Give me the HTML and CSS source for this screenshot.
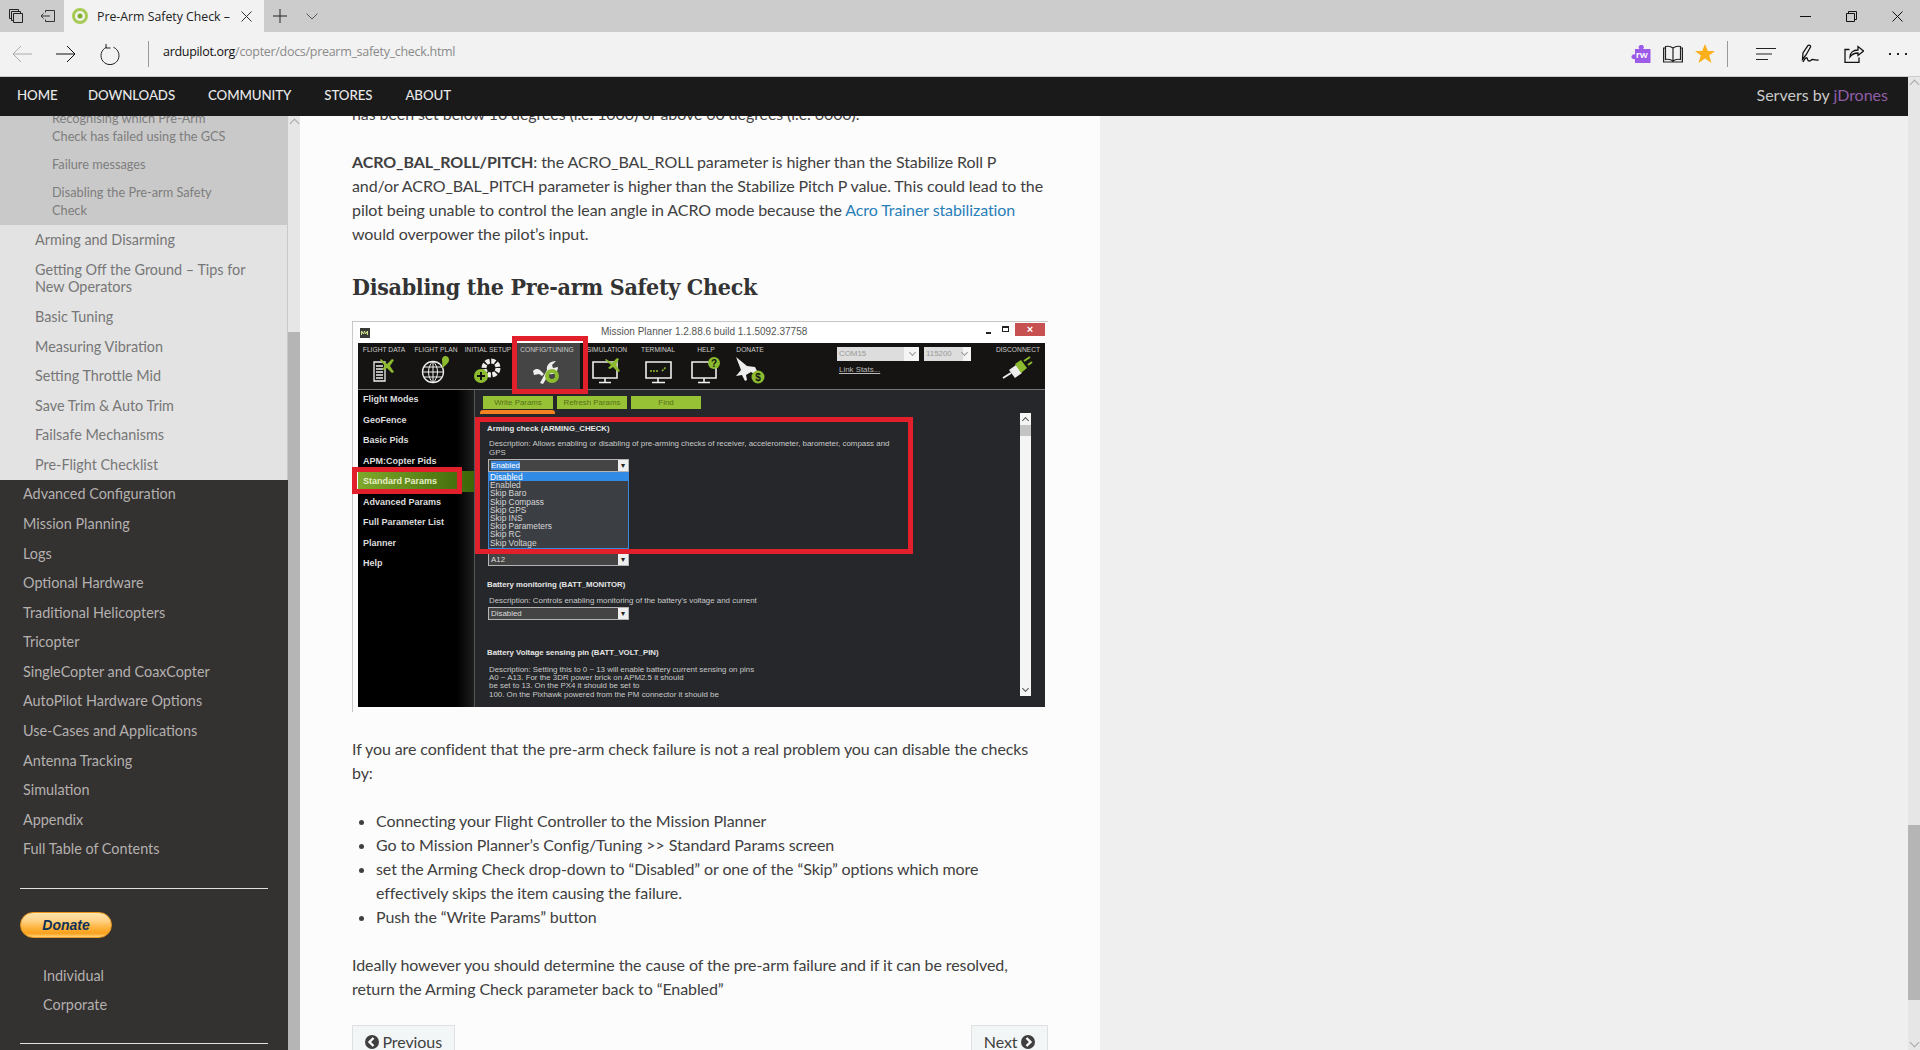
FILE: index.html
```html
<!DOCTYPE html>
<html lang="en">
<head>
    <meta charset="UTF-8">
    <title>Pre-Arm Safety Check</title>
    <link rel="stylesheet" href="styles.css">
</head>
<body>

    <!-- browser tab strip -->
    <div class="tabbar">
        <div class="tabbar-btn">
            <svg width="16" height="16" viewBox="0 0 16 16" fill="none" stroke="#222"><path d="M1.500 1.500h9v2M1.500 1.500v9h2M3.500 3.500h9v2M3.500 3.500v9h2M5.500 5.500h9v9h-9z"/></svg>
        </div>
        <div class="tabbar-btn">
            <svg width="16" height="14" viewBox="0 0 16 14" fill="none" stroke="#333"><path d="M5.500 3.500V1.500h9v11h-9v-2M1 7h9M3.500 4.500L1 7l2.500 2.500"/></svg>
        </div>
        <div class="tab">
            <svg width="16" height="16" viewBox="0 0 16 16"><circle cx="8" cy="8" r="6.500" fill="none" stroke="#a6cc55" stroke-width="3"/><circle cx="8" cy="8" r="2.500" fill="#7fae2e"/></svg>
            <span class="tab-title">Pre-Arm Safety Check –</span>
            <svg class="tab-close" width="11" height="11" viewBox="0 0 11 11" stroke="#333" fill="none"><path d="M.5.5l10 10M10.500.5l-10 10"/></svg>
        </div>
        <div class="tabbar-btn">
            <svg width="14" height="14" viewBox="0 0 14 14" stroke="#222" fill="none"><path d="M7 0v14M0 7h14"/></svg>
        </div>
        <div class="tabbar-btn">
            <svg width="12" height="7" viewBox="0 0 12 7" stroke="#555" fill="none"><path d="M.5.5L6 6 11.500.5"/></svg>
        </div>
        <div class="window-btns">
            <div class="window-btn"><svg width="11" height="11" viewBox="0 0 11 11" stroke="#111" fill="none"><path d="M0 5.500h11"/></svg></div>
            <div class="window-btn"><svg width="11" height="11" viewBox="0 0 11 11" stroke="#111" fill="none"><path d="M.5 2.500h8v8h-8zM2.500 2.500v-2h8v8h-2"/></svg></div>
            <div class="window-btn"><svg width="11" height="11" viewBox="0 0 11 11" stroke="#111" fill="none"><path d="M.5.5l10 10M10.500.5l-10 10"/></svg></div>
        </div>
    </div>

    <!-- address bar -->
    <div class="toolbar">
        <div class="tool-btn"><svg width="20" height="18" viewBox="0 0 20 18" stroke="#aaa" fill="none"><path d="M20 9H1M9 1L1 9l8 8"/></svg></div>
        <div class="tool-btn"><svg width="20" height="18" viewBox="0 0 20 18" stroke="#111" fill="none"><path d="M0 9h19M11 1l8 8-8 8"/></svg></div>
        <div class="tool-btn"><svg width="20" height="22" viewBox="0 0 20 22" stroke="#222" fill="none"><path d="M6.500 4.300A9 9 0 1 0 13.500 4.300M6 1v4h4.500" /></svg></div>
        <div class="tool-sep"></div>
        <div class="url"><b>ardupilot.org</b>/copter/docs/prearm_safety_check.html</div>
        <div class="tool-right">
            <div class="ext-btn">
                <svg width="20" height="19" viewBox="0 0 20 19"><path d="M4 4h4.500a2.500 2.500 0 1 1 3.500 0H19.500v14H4v-4a2.500 2.500 0 1 1 0-4.500z" fill="#9d5ce8"/></svg>
                <span class="ext-label">rw</span>
            </div>
            <div class="ext-btn"><svg width="20" height="18" viewBox="0 0 20 18" fill="none" stroke="#222" stroke-width="1.200"><path d="M10 3C8 1.500 5 1 2.500 1.500v13C5 14 8 14.500 10 16c2-1.500 5-2 7.500-1.500v-13C15 1 12 1.500 10 3zM10 3v13M2.500 3H.6v14h18.800V3h-1.900"/></svg></div>
            <div class="ext-btn"><svg width="20" height="20" viewBox="0 0 20 20"><path d="M10 0l2.900 7h7.100l-5.800 4.500 2.300 7.500L10 14.500 3.500 19l2.300-7.500L0 7h7.100z" fill="#fbb01b"/></svg></div>
            <div class="tool-sep right"></div>
            <div class="tool-btn"><svg width="20" height="14" viewBox="0 0 20 14" stroke="#222" fill="none"><path d="M0 1.500h20M0 7h16M0 12.500h12"/></svg></div>
            <div class="tool-btn"><svg width="20" height="20" viewBox="0 0 20 20" stroke="#111" stroke-width="1.300" fill="none"><path d="M2.500 15.500L3 9l5-7.500c1-1 3 0 2.500 1.500L6 11zM3 18c1.500-3 3-5 4-4s0 3 2 3 2-1.500 3.500-1.500 2 1 6 .5"/></svg></div>
            <div class="tool-btn"><svg width="20" height="18" viewBox="0 0 20 18" stroke="#111" stroke-width="1.300" fill="none"><path d="M5.500 4.500H1v13h14v-5M6 12c0-4 3-7 8-7V1.500L19.500 6 14 10.500V8c-4 0-6 1-8 4z"/></svg></div>
            <div class="tool-btn"><svg width="18" height="4" viewBox="0 0 18 4" fill="#222"><rect x="0" y="1" width="2" height="2"/><rect x="8" y="1" width="2" height="2"/><rect x="16" y="1" width="2" height="2"/></svg></div>
        </div>
    </div>

    <div class="page">
        <div class="page-main">
            <nav class="topnav">
                <a class="home-link" href="#">HOME</a>
                <a href="#">DOWNLOADS</a>
                <a href="#">COMMUNITY</a>
                <a href="#">STORES</a>
                <a href="#">ABOUT</a>
                <div class="servers">Servers by <a href="#">jDrones</a></div>
            </nav>

            <div class="columns">
                <aside class="sidebar">
                    <div class="sidebar-inner">
                        <ul class="toc-l3">
                            <li>Recognising which Pre-Arm Check has failed using the GCS</li>
                            <li>Failure messages</li>
                            <li>Disabling the Pre-arm Safety Check</li>
                        </ul>
                        <ul class="toc-l2">
                            <li>Arming and Disarming</li>
                            <li>Getting Off the Ground – Tips for New Operators</li>
                            <li>Basic Tuning</li>
                            <li>Measuring Vibration</li>
                            <li>Setting Throttle Mid</li>
                            <li>Save Trim &amp; Auto Trim</li>
                            <li>Failsafe Mechanisms</li>
                            <li>Pre-Flight Checklist</li>
                        </ul>
                        <ul class="toc-l1">
                            <li>Advanced Configuration</li>
                            <li>Mission Planning</li>
                            <li>Logs</li>
                            <li>Optional Hardware</li>
                            <li>Traditional Helicopters</li>
                            <li>Tricopter</li>
                            <li>SingleCopter and CoaxCopter</li>
                            <li>AutoPilot Hardware Options</li>
                            <li>Use-Cases and Applications</li>
                            <li>Antenna Tracking</li>
                            <li>Simulation</li>
                            <li>Appendix</li>
                            <li>Full Table of Contents</li>
                        </ul>
                        <div class="side-extra">
                            <hr>
                            <div class="donate">Donate</div>
                            <ul class="donate-links">
                                <li>Individual</li>
                                <li>Corporate</li>
                            </ul>
                            <hr>
                        </div>
                    </div>
                </aside>
                <div class="scrollbar side-scroll">
                    <div class="scroll-up"></div>
                    <div class="thumb"></div>
                </div>

                <main class="content">
                    <div class="content-inner">
                        <p>has been set below 10 degrees (i.e. 1000) or above 60 degrees (i.e. 6000).</p>
                        <p><strong>ACRO_BAL_ROLL/PITCH</strong>: the ACRO_BAL_ROLL parameter is higher than the Stabilize Roll P<br>and/or ACRO_BAL_PITCH parameter is higher than the Stabilize Pitch P value. This could lead to the pilot being unable to control the lean angle in ACRO mode because the <a href="#">Acro Trainer stabilization</a> would overpower the pilot’s input.</p>
                        <h2>Disabling the Pre-arm Safety Check</h2>

                        <!-- Mission Planner screenshot -->
                        <div class="shot">
                            <div class="mp">
                                <div class="mp-title">
                                    <svg class="mp-logo" width="10" height="10" viewBox="0 0 10 10"><rect width="10" height="10" fill="#3a3a36"/><path d="M1.500 7V3l2 3 1-3 1 3 2-3v4" stroke="#cde08a" fill="none"/></svg>
                                    <span class="mp-title-text">Mission Planner 1.2.88.6 build 1.1.5092.37758</span>
                                    <span class="mp-min"></span>
                                    <span class="mp-max"></span>
                                    <span class="mp-close">×</span>
                                </div>
                                <div class="mp-menu">
                                    <div class="mp-tab">FLIGHT DATA
                                        <svg width="26" height="28" viewBox="0 0 26 28" fill="none"><path d="M3 6h11v19H3zM5 10h7M5 13h7M5 16h7M5 19h7M5 22h7" stroke="#eee" stroke-width="1.300"/><path d="M10 3l6 5 5-5 2 1-4 6 4 6-2 1-5-5-3 2-2-1 3-3-5-6z" fill="#8dbb2f"/></svg>
                                    </div>
                                    <div class="mp-tab">FLIGHT PLAN
                                        <svg width="30" height="28" viewBox="0 0 30 28" fill="none"><circle cx="12" cy="16" r="10.500" stroke="#eee" stroke-width="1.300"/><path d="M12 5.500v21M1.500 16h21M3 11h18M3 21h18M12 5.500c-6 5-6 16 0 21M12 5.500c6 5 6 16 0 21" stroke="#eee"/><path d="M24 0a4 4 0 0 1 4 4c0 3-5 7-7 8 1-3 0-5 0-8a4 4 0 0 1 3-4z" fill="#8dbb2f"/></svg>
                                    </div>
                                    <div class="mp-tab">INITIAL SETUP
                                        <svg width="30" height="28" viewBox="0 0 30 28" fill="none"><circle cx="18" cy="12" r="7" stroke="#eee" stroke-width="5" stroke-dasharray="4 1.500"/><circle cx="8" cy="20" r="7" fill="#8dbb2f"/><path d="M4 20h8M8 16v8" stroke="#111" stroke-width="2"/></svg>
                                    </div>
                                    <div class="mp-tab selected">CONFIG/TUNING
                                        <svg width="30" height="28" viewBox="0 0 30 28" fill="none"><path d="M8 27L15 14c-1-5 3-9 9-9l-4 4 1 3 5-1c0 5-4 8-9 7l-6 10z" fill="#eee"/><path d="M1 15c3-3 6-2 8 0l3 3-2 2-3-2-5 1z" fill="#eee"/><circle cx="20" cy="20" r="5" stroke="#8dbb2f" stroke-width="4"/></svg>
                                    </div>
                                    <div class="mp-tab">SIMULATION
                                        <svg width="32" height="28" viewBox="0 0 32 28" fill="none"><path d="M2 6h24v16H2zM14 22v4M8 26.500h12" stroke="#eee" stroke-width="1.600"/><path d="M15 3l6 4 5-5 2 1-3 6 4 6-2 1-5-5-3 2-2-1 3-3-6-5z" fill="#8dbb2f"/></svg>
                                    </div>
                                    <div class="mp-tab">TERMINAL
                                        <svg width="32" height="28" viewBox="0 0 32 28" fill="none"><path d="M4 6h25v16H4zM16 22v4M10 26.500h13" stroke="#eee" stroke-width="1.600"/><path d="M8 15h9M20 15l4-4" stroke="#8dbb2f" stroke-width="1.600" stroke-dasharray="2 1"/></svg>
                                    </div>
                                    <div class="mp-tab">HELP
                                        <svg width="32" height="28" viewBox="0 0 32 28" fill="none"><path d="M2 6h24v16H2zM14 22v4M8 26.500h12" stroke="#eee" stroke-width="1.600"/><circle cx="24" cy="7" r="6" fill="#8dbb2f"/><text x="24" y="10.500" text-anchor="middle" class="mp-icon-text">?</text></svg>
                                    </div>
                                    <div class="mp-tab">DONATE
                                        <svg width="32" height="28" viewBox="0 0 32 28" fill="none"><path d="M2 1l11 9 8 1 4 8-1 1-7-4-5 3 1 5-2 1-3-6-6 1 5-6z" fill="#eee"/><circle cx="24" cy="21" r="6.500" fill="#8dbb2f"/><text x="24" y="24.500" text-anchor="middle" class="mp-icon-text">$</text></svg>
                                    </div>
                                    <div class="mp-conn">
                                        <div class="mp-fields">
                                            <div class="mp-field wide">COM15</div>
                                            <div class="mp-field">115200</div>
                                        </div>
                                        <div class="mp-link">Link Stats...</div>
                                    </div>
                                    <div class="mp-tab disconnect">DISCONNECT
                                        <svg width="32" height="24" viewBox="0 0 32 24" fill="none"><path d="M1 22l8-5" stroke="#eee" stroke-width="2"/><path d="M7 14l7-5 6 8-7 5z" fill="#eee"/><path d="M13 8l6-4 6 8-6 5z" fill="#8dbb2f"/><path d="M22 5l6-4M26 9l4-3" stroke="#8dbb2f" stroke-width="2"/></svg>
                                    </div>
                                </div>
                                <div class="mp-body">
                                    <div class="mp-side">
                                        <div>Flight Modes</div>
                                        <div>GeoFence</div>
                                        <div>Basic Pids</div>
                                        <div>APM:Copter Pids</div>
                                        <div class="active">Standard Params</div>
                                        <div>Advanced Params</div>
                                        <div>Full Parameter List</div>
                                        <div>Planner</div>
                                        <div>Help</div>
                                    </div>
                                    <div class="mp-params">
                                        <div class="mp-buttons">
                                            <span>Write Params</span>
                                            <span>Refresh Params</span>
                                            <span>Find</span>
                                        </div>
                                        <div class="mp-orange"></div>
                                        <div class="mp-head first">Arming check (ARMING_CHECK)</div>
                                        <div class="mp-desc">Description: Allows enabling or disabling of pre-arming checks of receiver, accelerometer, barometer, compass and<br>GPS</div>
                                        <div class="mp-select"><span class="picked">Enabled</span></div>
                                        <ul class="mp-list">
                                            <li class="on">Disabled</li>
                                            <li>Enabled</li>
                                            <li>Skip Baro</li>
                                            <li>Skip Compass</li>
                                            <li>Skip GPS</li>
                                            <li>Skip INS</li>
                                            <li>Skip Parameters</li>
                                            <li>Skip RC</li>
                                            <li>Skip Voltage</li>
                                        </ul>
                                        <div class="mp-select a12">A12</div>
                                        <div class="mp-head batt">Battery monitoring (BATT_MONITOR)</div>
                                        <div class="mp-desc">Description: Controls enabling monitoring of the battery's voltage and current</div>
                                        <div class="mp-select">Disabled</div>
                                        <div class="mp-head volt">Battery Voltage sensing pin (BATT_VOLT_PIN)</div>
                                        <div class="mp-desc">Description: Setting this to 0 ~ 13 will enable battery current sensing on pins<br>A0 ~ A13. For the 3DR power brick on APM2.5 it should<br>be set to 13. On the PX4 it should be set to<br>100. On the Pixhawk powered from the PM connector it should be</div>
                                        <div class="mp-scroll"><i></i></div>
                                    </div>
                                </div>
                            </div>
                            <div class="redbox box-tab"></div>
                            <div class="redbox box-side"></div>
                            <div class="redbox box-param"></div>
                        </div>

                        <p>If you are confident that the pre-arm check failure is not a real problem you can disable the checks by:</p>
                        <ul class="steps">
                            <li>Connecting your Flight Controller to the Mission Planner</li>
                            <li>Go to Mission Planner’s Config/Tuning &gt;&gt; Standard Params screen</li>
                            <li>set the Arming Check drop-down to “Disabled” or one of the “Skip” options which more effectively skips the item causing the failure.</li>
                            <li>Push the “Write Params” button</li>
                        </ul>
                        <p>Ideally however you should determine the cause of the pre-arm failure and if it can be resolved, return the Arming Check parameter back to “Enabled”</p>
                        <div class="pager">
                            <a class="btn" href="#">
                                <svg width="14" height="14" viewBox="0 0 14 14"><circle cx="7" cy="7" r="7" fill="#404040"/><path d="M8.500 3L4.500 7l4 4" stroke="#fcfcfc" stroke-width="2.400" fill="none"/></svg>
                                Previous
                            </a>
                            <a class="btn" href="#">
                                Next
                                <svg width="14" height="14" viewBox="0 0 14 14"><circle cx="7" cy="7" r="7" fill="#404040"/><path d="M5.500 3l4 4-4 4" stroke="#fcfcfc" stroke-width="2.400" fill="none"/></svg>
                            </a>
                        </div>
                    </div>
                </main>
                <div class="gutter"></div>
            </div>
        </div>
        <div class="scrollbar page-scroll">
            <div class="scroll-up"></div>
            <div class="thumb"></div>
            <div class="scroll-down"></div>
        </div>
    </div>

</body>
</html>
```

FILE: styles.css
```css
* {
    box-sizing: border-box;
}

html, body {
    height: 100%;
}

body {
    margin: 0;
    display: flex;
    flex-direction: column;
    overflow: hidden;
    font-family: 'Lato', sans-serif;
    font-size: 16px;
    color: #404040;
    background-color: #efefef;
}

ul {
    margin: 0;
    padding: 0;
    list-style: none;
}

/* browser chrome */
.tabbar {
    display: flex;
    height: 32px;
    flex: none;
    background-color: #ccc;
}

.tabbar-btn {
    width: 32px;
    display: flex;
    align-items: center;
    justify-content: center;
}

.tab {
    width: 200px;
    display: flex;
    align-items: center;
    padding-left: 8px;
    background-color: #f2f2f2;
}

.tab-title {
    margin-left: 9px;
    font-family: 'Open Sans', sans-serif;
    font-size: 12.300px;
    color: #222;
    white-space: nowrap;
}

.tab-close {
    margin-left: auto;
    margin-right: 12px;
}

.window-btns {
    display: flex;
    margin-left: auto;
}

.window-btn {
    width: 46px;
    display: flex;
    align-items: center;
    justify-content: center;
}

.toolbar {
    display: flex;
    align-items: center;
    height: 45px;
    flex: none;
    background-color: #f2f2f2;
    border-bottom: 1px solid #ccc;
}

.tool-btn {
    width: 44px;
    height: 44px;
    display: flex;
    align-items: center;
    justify-content: center;
}

.tool-sep {
    width: 1px;
    height: 26px;
    margin-left: 16px;
    background-color: #999;
}

.tool-sep.right {
    margin-left: 6px;
    margin-right: 16px;
}

.url {
    margin-left: 14px;
    padding-bottom: 5px;
    font-family: 'Open Sans', sans-serif;
    font-size: 12.500px;
    letter-spacing: -0.300px;
    color: #8a8a8a;
}

.url b {
    font-weight: 400;
    color: #111;
}

.tool-right {
    display: flex;
    align-items: center;
    margin-left: auto;
}

.ext-btn {
    position: relative;
    width: 32px;
    height: 44px;
    display: flex;
    align-items: center;
    justify-content: center;
}

.ext-label {
    position: absolute;
    left: 11px;
    top: 16px;
    font-size: 10px;
    font-weight: 700;
    color: #fff;
}

/* page area */
.page {
    flex: 1;
    min-height: 0;
    display: flex;
}

.page-main {
    flex: 1;
    min-width: 0;
    display: flex;
    flex-direction: column;
}

.topnav {
    display: flex;
    align-items: center;
    gap: 33px;
    height: 39px;
    flex: none;
    padding: 0 20px 3px 17px;
    background-color: #1a1a1a;
}

.topnav > a {
    font-size: 13.300px;
    font-weight: 500;
    letter-spacing: -0.100px;
    color: #e8e8e8;
    text-decoration: none;
}

.topnav > a.home-link {
    margin-right: -2.500px;
}

.servers {
    margin-left: auto;
    padding-bottom: 2px;
    color: #c9c9c9;
}

.servers a {
    color: #8f5ea8;
    text-decoration: none;
}

.columns {
    flex: 1;
    min-height: 0;
    display: flex;
}

.sidebar {
    width: 288px;
    flex: none;
    overflow: hidden;
    background-color: #343131;
}

.sidebar-inner {
    margin-top: -11px;
    font-size: 14.400px;
    line-height: 17.800px;
}

.toc-l3 {
    background-color: #c9c9c9;
    color: #7d7d7d;
    font-size: 12.750px;
}

.toc-l3 li {
    padding: 5.200px 50px 5.200px 52px;
}

.toc-l2 {
    background-color: #e3e3e3;
    border-right: 1px solid #c9c9c9;
    color: #777;
    font-size: 14.400px;
}

.toc-l2 li {
    padding: 5.900px 32px 5.900px 35px;
}

.toc-l1 {
    color: #b3b0ae;
}

.toc-l1 li {
    padding: 5.900px 20px 5.900px 23px;
}

.side-extra {
    padding: 24px 20px 0;
}

.side-extra hr {
    margin: 0;
    border: 0;
    height: 1px;
    background-color: #e0e0e0;
}

.donate {
    width: 92px;
    height: 26px;
    margin-top: 23px;
    border: 1px solid #e8981d;
    border-radius: 13px;
    background: linear-gradient(#ffe3ab 0%, #ffd48a 30%, #fdb33c 62%, #f9a11d 85%, #ffd27e 100%);
    text-align: center;
    font-family: 'Liberation Sans', sans-serif;
    font-size: 14px;
    font-weight: 700;
    font-style: italic;
    line-height: 24px;
    color: #0e3058;
}

.donate-links {
    margin: 23.500px 0 23px;
    color: #b3b0ae;
}

.donate-links li {
    padding: 5.600px 0 5.600px 23px;
}

.scrollbar {
    width: 12px;
    flex: none;
    display: flex;
    flex-direction: column;
    background-color: #e6e6e6;
}

.thumb {
    background-color: #b5b5b5;
}

.scroll-up, .scroll-down {
    position: relative;
    height: 12px;
}

.scroll-up::after, .scroll-down::after {
    content: "";
    position: absolute;
    left: 3px;
    width: 6px;
    height: 6px;
    border: solid #a8a8a8;
    border-width: 1px 0 0 1px;
}

.scroll-up::after {
    top: 4px;
    transform: rotate(45deg);
}

.scroll-down::after {
    top: 1px;
    transform: rotate(225deg);
}

.side-scroll .scroll-up {
    height: 216px;
}

.side-scroll .thumb {
    flex: 1;
}

.page-scroll .scroll-up {
    height: 748px;
}

.page-scroll .thumb {
    height: 175px;
    flex: none;
}

.page-scroll .scroll-down {
    margin-top: auto;
}

/* article */
.content {
    width: 800px;
    flex: none;
    overflow: hidden;
    padding: 0 52px;
    background-color: #fcfcfc;
    letter-spacing: -0.090px;
    line-height: 24px;
    color: #404040;
}

.content-inner {
    margin-top: -14px;
}

.content p {
    margin: 0 0 24px;
}

.content strong {
    font-weight: 700;
}

.content a {
    color: #2980b9;
    text-decoration: none;
}

.content h2 {
    margin: 0;
    padding: 1px 0 18px;
    font-family: 'DejaVu Serif', serif;
    font-stretch: condensed;
    font-size: 23px;
    font-weight: 700;
    letter-spacing: -0.300px;
    line-height: 32px;
    color: #333;
}

.steps {
    margin-bottom: 24px;
    padding-left: 24px;
    list-style: disc;
}

.pager {
    display: flex;
    justify-content: space-between;
}

.content a.btn {
    display: flex;
    align-items: center;
    gap: 3.500px;
    height: 34px;
    padding: 0 12px;
    border: 1px solid #e0e0e0;
    background-color: #f3f6f6;
    color: #404040;
}

/* Mission Planner screenshot, drawn small */
.shot {
    position: relative;
    width: 696px;
    height: 391px;
    margin-bottom: 25px;
    padding: 1px 3px 5px 5px;
    border-left: 1px solid #c8c8c8;
    border-top: 1px solid #c8c8c8;
    font-family: 'Liberation Sans', sans-serif;
    font-size: 7.900px;
    letter-spacing: 0;
    line-height: 8.300px;
    color: #c9c9c9;
}

.mp {
    height: 100%;
    display: flex;
    flex-direction: column;
}

.mp-title {
    display: flex;
    align-items: flex-start;
    height: 20px;
    flex: none;
    padding-left: 2px;
    background-color: #fff;
}

.mp-logo {
    margin-top: 5px;
}

.mp-title-text {
    margin-left: 231px;
    margin-top: 3px;
    font-size: 10px;
    line-height: 12px;
    color: #555;
    white-space: nowrap;
}

.mp-min {
    width: 5px;
    height: 2px;
    margin: 9px 0 0 auto;
    background-color: #222;
}

.mp-max {
    width: 7px;
    height: 6px;
    margin: 3px 0 0 11px;
    border: 1px solid #222;
    border-top-width: 2px;
}

.mp-close {
    width: 30px;
    height: 13px;
    margin-left: 6px;
    background-color: #c75050;
    color: #fff;
    font-size: 11px;
    font-weight: 700;
    line-height: 12px;
    text-align: center;
}

.mp-menu {
    display: flex;
    height: 47px;
    flex: none;
    background-color: #151412;
    border-bottom: 1px solid #777;
}

.mp-tab {
    width: 52px;
    flex: none;
    display: flex;
    flex-direction: column;
    align-items: center;
    padding-top: 3px;
    font-size: 6.700px;
    line-height: 8px;
    color: #ccc;
    white-space: nowrap;
}

.mp-tab:nth-child(4) { width: 66px; }
.mp-tab:nth-child(5) { width: 54px; }
.mp-tab:nth-child(6) { width: 48px; }
.mp-tab:nth-child(7) { width: 48px; }
.mp-tab:nth-child(8) { width: 40px; }

.mp-tab svg {
    margin-top: 2px;
}

.mp-tab.selected {
    background-color: #454545;
}

.mp-tab.disconnect {
    width: 54px;
    margin-left: auto;
}

.mp-icon-text {
    font-size: 10px;
    font-weight: 700;
    fill: #151412;
}

.mp-conn {
    margin-left: 67px;
    padding-top: 4px;
}

.mp-fields {
    display: flex;
    gap: 5px;
}

.mp-field {
    position: relative;
    width: 47px;
    height: 14px;
    padding-left: 2px;
    background: linear-gradient(to right, #ddd 82%, #f5f5f5 82%);
    color: #999;
    line-height: 13px;
}

.mp-field::after {
    content: "";
    position: absolute;
    right: 4px;
    top: 3px;
    width: 4px;
    height: 4px;
    border: solid #999;
    border-width: 0 1px 1px 0;
    transform: rotate(45deg);
}

.mp-field.wide {
    width: 82px;
}

.mp-link {
    margin-top: 5px;
    padding-left: 2px;
    text-decoration: underline;
    color: #bbb;
}

.mp-body {
    flex: 1;
    min-height: 0;
    display: flex;
}

.mp-side {
    width: 117px;
    flex: none;
    background: linear-gradient(to right, #000 85%, #1e1e1e);
    border-right: 1px solid #555;
    color: #ddd;
    font-size: 9px;
    font-weight: 700;
    line-height: 20.500px;
}

.mp-side div {
    padding-left: 5px;
}

.mp-side div:first-child {
    margin-top: -1px;
}

.mp-side .active {
    background: linear-gradient(to right, #7fa92b, #3c6608);
    color: #e6efc8;
}

.mp-params {
    position: relative;
    flex: 1;
    min-width: 0;
    padding: 6px 0 0 12px;
    overflow: hidden;
    background-color: #25272a;
}

.mp-buttons {
    display: flex;
    gap: 4px;
    margin-left: -4px;
    margin-bottom: 1px;
}

.mp-buttons span {
    width: 70px;
    height: 13px;
    background-color: #98c235;
    color: #55711a;
    text-align: center;
    line-height: 13px;
}

.mp-orange {
    width: 75px;
    height: 4px;
    margin-left: -7px;
    border-radius: 3px 3px 0 0;
    background-color: #f58220;
}

.mp-head {
    font-size: 7.800px;
    font-weight: 700;
    color: #e6e6e6;
    white-space: nowrap;
}

.mp-head.first {
    margin-top: 11px;
    margin-bottom: 7px;
}

.mp-head.batt {
    margin-top: 15px;
    margin-bottom: 8px;
}

.mp-head.volt {
    margin-top: 29px;
    margin-bottom: 8px;
}

.mp-desc {
    padding-left: 2px;
    white-space: nowrap;
}

.mp-select {
    position: relative;
    width: 141px;
    height: 13px;
    margin: 2px 0 0 1px;
    padding: 2px;
    border: 1px solid #b5b5b5;
    background-color: #444;
    color: #ddd;
    line-height: 8px;
}

.mp-select::after {
    content: "▾";
    position: absolute;
    top: 0;
    right: 0;
    width: 10px;
    height: 11px;
    background-color: #eee;
    color: #222;
    text-align: center;
    line-height: 11px;
}

.mp-select .picked {
    background-color: #3a88dd;
    color: #fff;
}

.mp-list {
    width: 141px;
    height: 77px;
    margin-left: 1px;
    border: 1px solid #3a88dd;
    background-color: #3b3f44;
    color: #d5d5d5;
    font-size: 8.400px;
    line-height: 8.200px;
}

.mp-list li {
    padding-left: 1px;
}

.mp-list li.on {
    background-color: #2f8be6;
    color: #fff;
}

.mp-select.a12 {
    margin-top: 4px;
}

.mp-scroll {
    position: absolute;
    top: 23px;
    right: 14px;
    bottom: 11px;
    width: 11px;
    padding-top: 12px;
    background-color: #f5f5f5;
}

.mp-scroll::before, .mp-scroll::after {
    content: "";
    position: absolute;
    left: 3px;
    width: 4px;
    height: 4px;
    border: solid #555;
    border-width: 1px 0 0 1px;
}

.mp-scroll::before {
    top: 5px;
    transform: rotate(45deg);
}

.mp-scroll::after {
    bottom: 5px;
    transform: rotate(225deg);
}

.mp-scroll i {
    display: block;
    height: 11px;
    background-color: #c4c4c4;
}

.redbox {
    position: absolute;
    border: 5px solid #e2202c;
}

.box-tab {
    left: 159px;
    top: 14px;
    width: 76px;
    height: 58px;
}

.box-side {
    left: -1px;
    top: 145px;
    width: 110px;
    height: 27px;
}

.box-param {
    left: 122px;
    top: 95px;
    width: 438px;
    height: 137px;
}

.gutter {
    flex: 1;
    background-color: #efefef;
}
```
